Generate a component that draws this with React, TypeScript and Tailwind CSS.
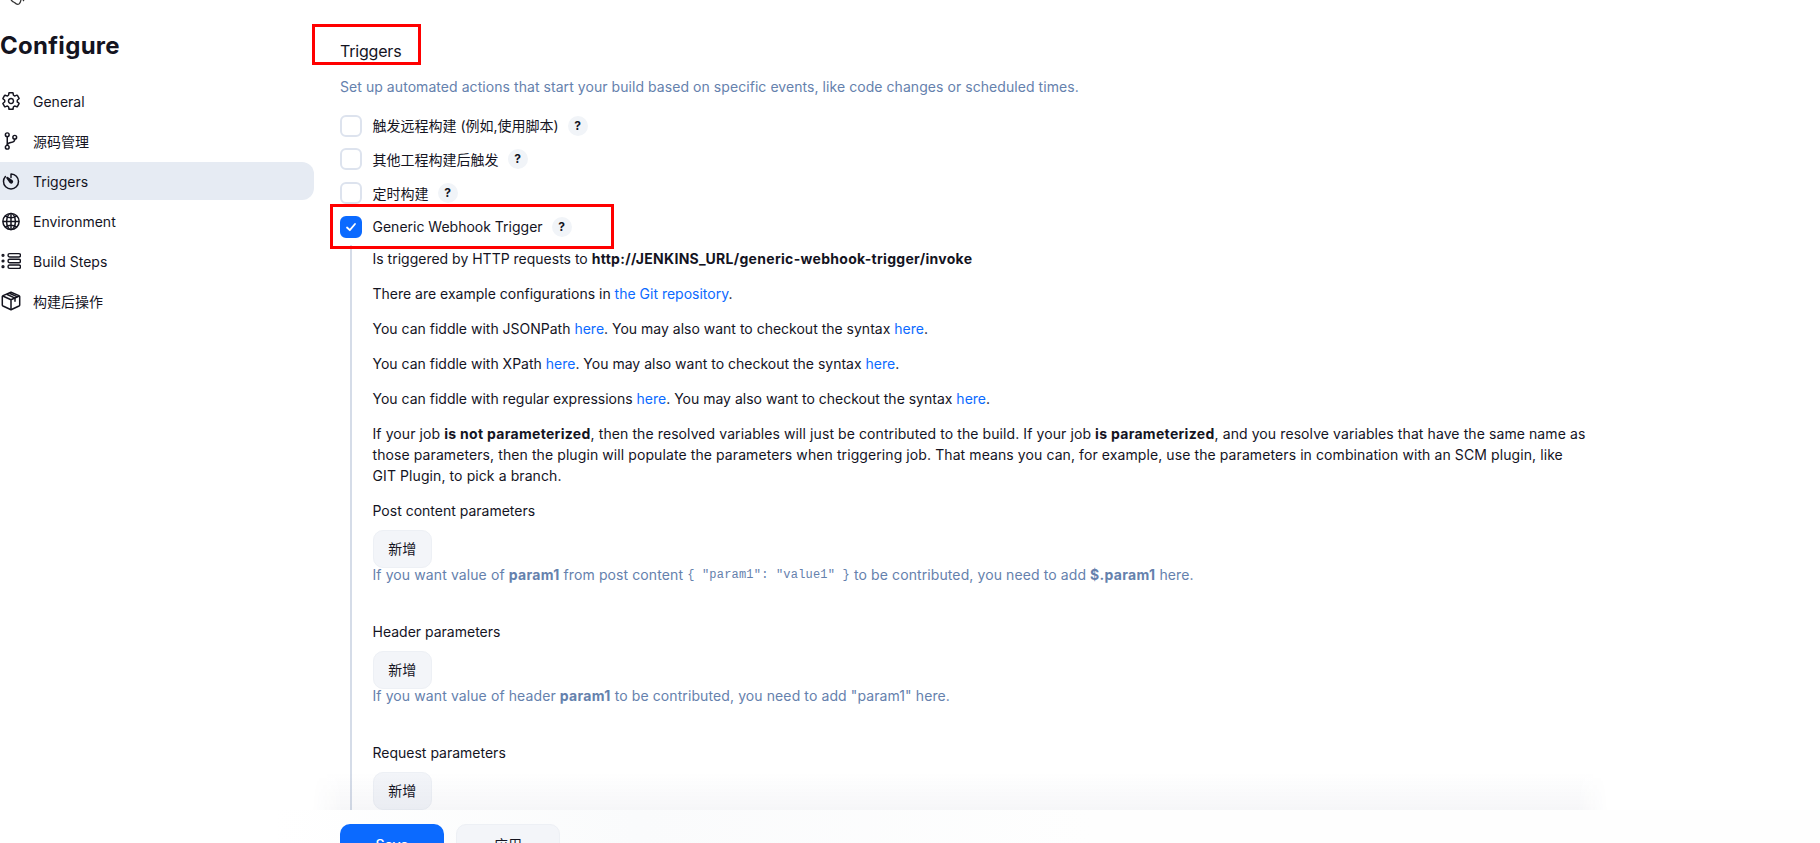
import React from 'react';
import { IoSettingsOutline, IoGitBranchOutline, IoTimerOutline, IoGlobeOutline } from 'react-icons/io5';

const font = 'font-["Inter","Noto_Sans_CJK_SC",sans-serif]';
const ionStroke = '[&_*]:[stroke-width:38]';

function StepsIcon() {
  return (
    <svg width="20" height="20" viewBox="0 0 20 20" fill="none" stroke="currentColor" strokeWidth="1.4">
      <rect x="7" y="2.600" width="12.500" height="3.400" rx="1.700" />
      <rect x="7" y="8.300" width="12.500" height="3.400" rx="1.700" />
      <rect x="7" y="14" width="12.500" height="3.400" rx="1.700" />
      <circle cx="2" cy="4.300" r="0.900" />
      <circle cx="2" cy="10" r="0.900" />
      <circle cx="2" cy="15.700" r="0.900" />
    </svg>
  );
}

function PackageIcon() {
  return (
    <svg width="20" height="20" viewBox="0 0 20 20" fill="none" stroke="currentColor" strokeWidth="1.500" strokeLinejoin="round">
      <path d="M10 1.200 18 4.600c.5.200.7.600.7 1v8.300c0 .5-.2.800-.7 1.100l-8 3.800-8-3.800c-.5-.3-.7-.6-.7-1.100V5.600c0-.4.200-.8.700-1z" />
      <path d="M1.800 5 10 8.800 18.200 5M10 8.800v9.500" />
      <path d="M5.700 3.200 14 7.100v3.600M8.500 2.200l8 3.700" />
    </svg>
  );
}

const navItems = [
  { label: 'General', icon: <IoSettingsOutline size={22} className={ionStroke} /> },
  { label: '源码管理', icon: <IoGitBranchOutline size={22} className={ionStroke} /> },
  { label: 'Triggers', icon: <IoTimerOutline size={21} className={ionStroke} />, active: true },
  { label: 'Environment', icon: <IoGlobeOutline size={21} className={ionStroke} /> },
  { label: 'Build Steps', icon: <StepsIcon /> },
  { label: '构建后操作', icon: <PackageIcon /> },
];

function Help() {
  return (
    <span className="ml-[9px] flex h-5 w-5 items-center justify-center rounded-full bg-[#f1f4f8] text-[12px] font-bold text-[#14141f]">?</span>
  );
}

function Check({ label, checked }: { label: string; checked?: boolean }) {
  return (
    <div className="flex h-[33.67px] items-center">
      <span className={`flex h-[22px] w-[22px] items-center justify-center rounded-[6px] border-2 ${checked ? 'border-[#0b6aff] bg-[#0b6aff]' : 'border-[#dde3ee] bg-white'}`}>
        {checked && (
          <svg width="12" height="12" viewBox="0 0 12 12" fill="none" stroke="white" strokeWidth="1.800" strokeLinecap="round" strokeLinejoin="round">
            <path d="M2 6.500 4.800 9.200 10 3" />
          </svg>
        )}
      </span>
      <span className="ml-[10.500px] text-[14px]">{label}</span>
      <Help />
    </div>
  );
}

function Link({ children }: { children: React.ReactNode }) {
  return <a className="text-[#0b6aff]">{children}</a>;
}

function Strong({ children }: { children: React.ReactNode }) {
  return <b className="tracking-[0.3px]">{children}</b>;
}

function AddButton() {
  return (
    <button className="flex h-[38px] w-[59.500px] items-center justify-center rounded-[10px] border border-[#edf0f5] bg-[#f3f5f9] text-[14px]">新增</button>
  );
}

function ParamBlock({ title, children }: { title: string; children?: React.ReactNode }) {
  return (
    <div className="h-[121px]">
      <div className="flex h-[21px] items-center text-[14px] text-[#14141f]">{title}</div>
      <div className="mt-[9px]"><AddButton /></div>
      {children && (
        <div className="flex h-[14px] items-center whitespace-pre text-[14px] leading-[14px] tracking-[0.1px] text-[#6581ad]">{children}</div>
      )}
    </div>
  );
}

export default function App() {
  return (
    <div className={`${font} relative h-[843px] w-[1820px] overflow-hidden bg-white text-[#14141f]`}>
      <div className="flex h-[810px] overflow-hidden">
        <aside className="w-[340px] shrink-0">
          <svg width="18" height="6" viewBox="0 0 18 6" fill="none" stroke="#333" strokeWidth="1.300" className="ml-[8px]">
            <path d="M3 0c1 1 2 2 3.500 2.500C8 4 10 4.500 11 4s1.500-2 2-4M15 0l1 1" />
          </svg>
          <h1 className="mt-[25px] h-[30px] text-[24px] leading-[30px] font-bold tracking-[0.3px]">Configure</h1>
          <nav className="mt-[21px] flex w-[314px] flex-col gap-[2px]">
            {navItems.map((item) => (
              <div key={item.label} className={`flex h-[38px] items-center rounded-r-[12px] pl-[1px] ${item.active ? 'bg-[#e6ebf3]' : ''}`}>
                <span className="flex w-[20px] justify-center">{item.icon}</span>
                <span className="ml-[12px] text-[14px]">{item.label}</span>
              </div>
            ))}
          </nav>
        </aside>

        <main className="min-w-0 flex-1">
          <div className="relative mt-[38px] h-[26px] text-[16px] leading-[26px] tracking-[-0.2px]">Triggers</div>
          <p className="mt-[12px] text-[14px] leading-[22px] tracking-[0.06px] text-[#6581ad]">
            Set up automated actions that start your build based on specific events, like code changes or scheduled times.
          </p>
          <div className="mt-[11px]">
            <Check label="触发远程构建 (例如,使用脚本)" />
            <Check label="其他工程构建后触发" />
            <Check label="定时构建" />
            <Check label="Generic Webhook Trigger" checked />
          </div>

          <div className="ml-[10px] mt-[1px] border-l-2 border-[#d5dce8] pl-[20.500px] pt-[3px] text-[14px]">
            <div className="flex h-[21px] items-center">
              <span className="whitespace-pre">Is triggered by HTTP requests to <Strong>http://JENKINS_URL/generic-webhook-trigger/invoke</Strong></span>
            </div>
            <p className="mt-[14px] leading-[21px]">There are example configurations in <Link>the Git repository</Link>.</p>
            <p className="mt-[14px] leading-[21px]">You can fiddle with JSONPath <Link>here</Link>. You may also want to checkout the syntax <Link>here</Link>.</p>
            <p className="mt-[14px] leading-[21px]">You can fiddle with XPath <Link>here</Link>. You may also want to checkout the syntax <Link>here</Link>.</p>
            <p className="mt-[14px] leading-[21px]">You can fiddle with regular expressions <Link>here</Link>. You may also want to checkout the syntax <Link>here</Link>.</p>
            <p className="mt-[14px] w-[1216px] leading-[21px] tracking-[0.09px]">
              If your job <Strong>is not parameterized</Strong>, then the resolved variables will just be contributed to the build. If your job <Strong>is parameterized</Strong>, and you resolve variables that have the same name as those parameters, then the plugin will populate the parameters when triggering job. That means you can, for example, use the parameters in combination with an SCM plugin, like GIT Plugin, to pick a branch.
            </p>
            <div className="mt-[14px]">
              <ParamBlock title="Post content parameters">
                If you want value of <Strong>param1</Strong> from post content <code className='font-["Liberation_Mono",monospace] text-[12px] tracking-[0.2px]'>{'{ "param1": "value1" }'}</code> to be contributed, you need to add <Strong>$.param1</Strong> here.
              </ParamBlock>
              <ParamBlock title="Header parameters">
                If you want value of header <Strong>param1</Strong> to be contributed, you need to add "param1" here.
              </ParamBlock>
              <ParamBlock title="Request parameters" />
            </div>
          </div>
        </main>
      </div>

      {/* sticky save bar, content fades under it */}
      <div className="pointer-events-none absolute bottom-[33px] left-[312px] h-[38px] w-[1296px] bg-gradient-to-b from-transparent to-[#1e2850]/[0.04] [mask-image:linear-gradient(90deg,transparent,black_30px,black_calc(100%-30px),transparent)]" />
      <footer className="flex h-[33px] gap-[12px] bg-gradient-to-r from-white from-[15%] via-[#fafbfc] via-[35%] to-[#fefefe] to-[60%] pl-[340px] pt-[14px]">
        <button className="h-[40px] w-[104px] rounded-[10px] bg-[#0b6aff] text-[14px] font-medium text-white">Save</button>
        <button className="h-[40px] w-[104px] rounded-[10px] border border-[#edf0f5] bg-[#f3f5f9] text-[14px]">应用</button>
      </footer>

      {/* annotation boxes drawn on the screenshot */}
      <div className="absolute left-[312px] top-[24px] h-[41px] w-[109px] border-[3px] border-[#ff0000]" />
      <div className="absolute left-[330px] top-[204px] h-[45px] w-[284px] border-[3px] border-[#ff0000]" />
    </div>
  );
}
